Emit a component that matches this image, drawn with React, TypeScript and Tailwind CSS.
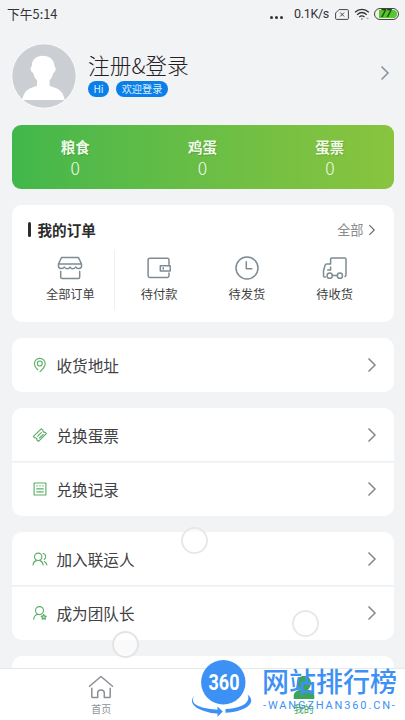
import type { ReactNode } from 'react'
import clsx from 'clsx'

const ORDER_GRAY = '#7d8b93'
const GREEN = '#5aae68'

interface IconProps { className?: string }

function Chevron({ className }: IconProps) {
  return (
    <svg viewBox="0 0 10 16" fill="none" stroke="currentColor" strokeWidth="1.5" className={clsx('shrink-0', className)}>
      <path d="M1.5 1.5 8 8l-6.5 6.5" />
    </svg>
  )
}

function OrderIcon({ children }: { children: ReactNode }) {
  return (
    <svg viewBox="0 0 26 26" className="size-[26px]" fill="none" stroke={ORDER_GRAY} strokeWidth="1.5" strokeLinecap="round" strokeLinejoin="round">
      {children}
    </svg>
  )
}

function RowIcon({ children }: { children: ReactNode }) {
  return (
    <svg viewBox="0 0 16 16" className="size-4 shrink-0" fill="none" stroke={GREEN} strokeWidth="1.15" strokeLinecap="round" strokeLinejoin="round">
      {children}
    </svg>
  )
}

const BALANCES = ['粮食', '鸡蛋', '蛋票']

const ORDERS = [
  {
    label: '全部订单',
    icon: (
      <OrderIcon>
        <path d="M4.500 2.500h17l3 6.500v2.500c0 2.200-4.500 2.900-5.800.5-1.300 2.400-4.500 2.200-5.700.2-1.200 2-4.400 2.200-5.700-.2-1.300 2.400-5.800 1.700-5.800-.5V9zM1.500 9h23" />
        <path d="M3.700 16.500V22c0 .9.600 1.500 1.500 1.500h16c.9 0 1.500-.6 1.500-1.500v-5.500" />
      </OrderIcon>
    ),
  },
  {
    label: '待付款',
    icon: (
      <OrderIcon>
        <path d="M23 9.500V5c0-1.100-.6-1.700-1.700-1.700H3.800c-1.100 0-1.700.6-1.700 1.700v15.800c0 1.100.6 1.700 1.700 1.700h17.500c1.100 0 1.700-.6 1.700-1.700V18" />
        <path d="M14.300 10.800h9.900V16h-9.900zM17.200 12.700v1.400" />
      </OrderIcon>
    ),
  },
  {
    label: '待发货',
    icon: (
      <OrderIcon>
        <circle cx="13" cy="13" r="11" />
        <path d="M12.300 6.800v7h5.500" />
      </OrderIcon>
    ),
  },
  {
    label: '待收货',
    icon: (
      <OrderIcon>
        <path d="M3.500 22h-1c-.8 0-1-.4-1-1v-5.300l1.500-5.200c.3-1 .8-1.500 1.700-1.500H8.600V4.200c0-.8.4-1.200 1.200-1.200h13c.8 0 1.200.4 1.200 1.200V20c0 .8-.2 1.200-1 1.500" />
        <path d="M8.600 12v3H5.700M10.400 20.600h4.800" />
        <circle cx="7.700" cy="20.700" r="2.600" />
        <circle cx="17.900" cy="20.700" r="2.600" />
      </OrderIcon>
    ),
  },
]

const MENU = [
  [
    {
      label: '收货地址',
      icon: (
        <RowIcon>
          <path d="M5.800 12.700C3.500 10.700 2.400 8.700 2.400 6.700a5.400 5.400 0 1 1 10.800 0c0 3-2.500 5.500-5.200 8" />
          <circle cx="7.800" cy="6.500" r="2.500" />
        </RowIcon>
      ),
    },
  ],
  [
    {
      label: '兑换蛋票',
      icon: (
        <RowIcon>
          <path d="m9.200 1.800 1.700 1.300c-.2 1.400.7 2.300 2.200 2.200l1.300 1.400-7.900 7.600-1.600-1.300c.3-1.500-.8-2.500-2.200-2.200L1.400 9.300z" />
          <path d="m5.700 9.200 3.700-3.500M7.500 11l3.700-3.500" />
        </RowIcon>
      ),
    },
    {
      label: '兑换记录',
      icon: (
        <RowIcon>
          <path d="M2.100 2h11.800v12H2.100zM4.700 7.800h6.600M4.700 10.800h6.600M5 4.600v.5M8 4.600v.5M11 4.600v.5" />
        </RowIcon>
      ),
    },
  ],
  [
    {
      label: '加入联运人',
      icon: (
        <RowIcon>
          <circle cx="6.200" cy="5.800" r="3.700" />
          <path d="M1 14c.4-2.600 1.900-4 3.700-4.600M7.800 9.400c1.900.7 2.900 2.200 3.300 4.600M11 2.500c2.800.2 3.800 4.400 1.200 6M12.300 10.500c1.500.7 2.300 1.800 2.600 3.300" />
        </RowIcon>
      ),
    },
    {
      label: '成为团队长',
      icon: (
        <RowIcon>
          <circle cx="7.500" cy="5.600" r="4" />
          <path d="M1.700 14.200c.3-2.700 1.700-4.200 4-4.900" />
          <path d="m11.700 9.400.8 1.500 1.800.3-1.200 1.300.2 1.700-1.600-.7-1.600.7.2-1.700-1.200-1.300 1.800-.3z" fill={GREEN} fillOpacity=".35" />
        </RowIcon>
      ),
    },
  ],
]

function StatusBar() {
  return (
    <div className="flex h-7 items-center justify-between pl-[7px] pr-[6px] text-[#303236]">
      <span className="text-[12.800px] leading-none">下午5:14</span>
      <div className="flex items-center">
        <div className="mr-[11px] mt-1.5 flex gap-[2px]">
          <i className="size-[3px] rounded-full bg-[#333]" />
          <i className="size-[3px] rounded-full bg-[#333]" />
          <i className="size-[3px] rounded-full bg-[#333]" />
        </div>
        <span className="mr-[6px] w-[35px] whitespace-nowrap font-[Roboto] text-[12.500px] leading-none tracking-[-0.300px]">0.1K/s</span>
        <svg viewBox="0 0 14 11" className="mr-[5px] h-[11px] w-[14px]" fill="none" stroke="#444" strokeWidth="1">
          <path d="M4 .6h8.400c.6 0 1 .4 1 1v7.800c0 .6-.4 1-1 1H1.600c-.6 0-1-.4-1-1V4zM5.200 3.500l4 4M9.200 3.500l-4 4" />
        </svg>
        <svg viewBox="0 0 16 12" className="mr-[4px] h-3 w-4" fill="none" stroke="#333" strokeWidth="1.300">
          <path d="M1 4.300c4-3.800 9.800-3.800 13.800 0M3.100 6.700c2.900-2.600 6.700-2.600 9.600 0M5.300 8.900c1.600-1.300 3.600-1.300 5.200 0" />
          <circle cx="7.900" cy="10.900" r=".7" fill="#333" stroke="none" />
          <path d="M12.500 10.400h2" stroke="#aaa" />
        </svg>
        <div className="flex h-[12px] w-[25px] items-center justify-end rounded-full border border-[#444] bg-[#e9f6e4] p-px">
          <div className="flex h-full w-[18px] items-center justify-center rounded-r-full bg-[#58c62c] pr-1 font-[Roboto] text-[10px] font-bold italic leading-none text-[#17480f]">77</div>
        </div>
      </div>
    </div>
  )
}

function Profile() {
  return (
    <div className="flex h-[97px] items-start pl-[11px] pr-[15px] pt-[15px]">
      <svg viewBox="0 0 66 66" className="size-[66px] shrink-0">
        <circle cx="33" cy="33" r="32.200" fill="#cbcfd4" stroke="#fff" strokeWidth=".8" />
        <path d="M11.200 57c1.200-6.500 4-10.200 8.800-12l6-2.200v-5.600c-2-1.800-3.200-4-3.900-7.400-2.600-.7-3.200-5.500-1.300-6.800C20.700 16 26 12.700 31.500 12.700c6.700 0 12.200 4 12 10.800 2 1 1.500 5.700-1.200 6.500-.7 3-1.800 5.500-3.700 7.200v5.600l6.100 2.200c4.900 1.800 7.800 5.600 9.100 12z" fill="#fff" />
      </svg>
      <div className="ml-[11px] flex-1 pt-2">
        <h1 className="text-[21.700px] font-light leading-[28px] text-[#1f2125]">注册&amp;登录</h1>
        <div className="mt-[2px] flex gap-[7px] text-[10.200px] leading-[16px] text-[#d9f0ff]">
          <span className="w-[21px] rounded-full bg-[#0b7ee9] text-center">Hi</span>
          <span className="w-[52px] rounded-full bg-[#0b7ee9] text-center">欢迎登录</span>
        </div>
      </div>
      <Chevron className="mt-[22px] h-4 w-[10px] text-[#84919a]" />
    </div>
  )
}

function Orders() {
  return (
    <section className="h-[117px] shrink-0 rounded-[10px] bg-white">
      <div className="flex items-center pl-[16px] pr-[18px] pt-[16px]">
        <span className="h-[15px] w-[3px] rounded-full bg-[#2c2c2c]" />
        <h2 className="ml-[7px] flex-1 text-[14.600px] font-bold leading-[17px] text-[#2b2b2b]">我的订单</h2>
        <span className="text-[13.200px] leading-[17px] text-[#8b8b8b]">全部</span>
        <Chevron className="ml-[4px] h-[12px] w-[8px] text-[#666]" />
      </div>
      <div className="mt-[12px] flex pl-[15px] pr-[15px]">
        {ORDERS.map((order, idx) => (
          <div key={order.label} className={clsx('flex h-[60px] flex-1 flex-col items-center pt-[5px]', idx === 0 && 'border-r border-[#f0f0f0]')}>
            {order.icon}
            <span className="mt-[5px] text-[12.200px] leading-[16px] text-[#404040]">{order.label}</span>
          </div>
        ))}
      </div>
    </section>
  )
}

function TabBar() {
  return (
    <nav className="grid h-[52px] shrink-0 grid-cols-2 border-t border-[#e7e8ea] bg-white text-[10px] leading-[14px]">
      <div className="flex flex-col items-center pt-[5px] text-[#8f9499]">
        <svg viewBox="0 0 26 26" className="size-[26px]" fill="none" stroke="#8a8f95" strokeWidth="1.500" strokeLinecap="round" strokeLinejoin="round">
          <path d="M1.500 12.300 13 2.500l11.500 9.800M3.800 14.200v8.500c0 .6.3.9.900.9h5v-4.400c0-4.200 6.600-4.200 6.600 0v4.400h5c.6 0 .9-.3.900-.9v-8.500" />
        </svg>
        <span className="mt-[2px]">首页</span>
      </div>
      <div className="flex flex-col items-center pt-[6px] text-[#43a557]">
        <svg viewBox="0 0 24 24" className="size-6" fill="#3da45a">
          <path d="M12 1c4.200 0 7 2.600 7 6.700 0 3-1.300 5.500-3.200 7 3.500.8 6.100 2.500 6.500 5.800V24H1.700v-3.500c.4-3.300 3-5 6.500-5.800-1.900-1.500-3.200-4-3.200-7C5 3.600 7.800 1 12 1z" />
        </svg>
        <span className="mt-[3px]">我的</span>
      </div>
    </nav>
  )
}

function Watermark() {
  return (
    <div className="absolute bottom-0 right-[5px] flex h-[62px] w-[206px] text-[#3d91f5]">
      <div className="relative w-[60px] shrink-0">
        <svg viewBox="0 0 60 62" className="h-[62px] w-[60px] overflow-visible" fill="#3d91f5">
          <circle cx="29.300" cy="24.300" r="22.200" />
          <path d="M.8 37.500C-5.500 43-1 49.500 10 53c6 2 10 2.600 13.500 2.400v3.300l5.300-5.200-5.300-5v3.200C12 51-1.500 48-1.100 42c0-2 .8-3.300 1.900-4.500z" />
          <path d="M53.500 36.500c9 6.500 2 16.700-22 18.300v-3.700c15-1.100 26-6 22-14.600z" />
        </svg>
        <div className="absolute inset-x-0 top-[13px] h-[23px] scale-x-[0.800] text-center font-[Roboto] text-[22.500px] font-bold leading-[23px] text-white">360</div>
      </div>
      <div className="pl-[8px] pt-[8px]">
        <div className="whitespace-nowrap text-[27px] font-medium leading-[30px]">网站排行榜</div>
        <div className="mt-[4px] whitespace-nowrap pl-px font-[Roboto] text-[11px] leading-[12px] tracking-[1.850px]">-WANGZHAN360.CN-</div>
      </div>
    </div>
  )
}

// soft touch rings floating over the list
function Bubbles() {
  return (
    <>
      <i className="absolute left-[181px] top-[527px] size-[27px] rounded-full border-2 border-[#e7e8ea] bg-white/60" />
      <i className="absolute left-[292px] top-[610px] size-[27px] rounded-full border-2 border-[#e7e8ea] bg-white/60" />
      <i className="absolute left-[112px] top-[631px] size-[27px] rounded-full border-2 border-[#e3e4e6] bg-white/60" />
    </>
  )
}

export default function App() {
  return (
    <div className="relative flex h-[720px] w-[405px] flex-col overflow-hidden bg-[#f2f3f5] font-['Noto_Sans_CJK_SC',sans-serif]">
      <StatusBar />
      <Profile />
      <main className="flex min-h-0 flex-1 flex-col gap-4 overflow-hidden px-[11.500px]">
        <section className="grid h-16 shrink-0 grid-cols-3 rounded-[9px] bg-linear-to-r from-[#41b74b] to-[#89c43e] pt-[13px] text-center text-[#effbe8]">
          {BALANCES.map(label => (
            <div key={label}>
              <div className="text-[14.500px] font-bold leading-[18px] [text-shadow:1px_1px_1px_rgba(0,0,0,0.150)]">{label}</div>
              <div className="text-[17.500px] font-light leading-[24px]">0</div>
            </div>
          ))}
        </section>
        <Orders />
        {MENU.map((group, idx) => (
          <section key={idx} className="shrink-0 overflow-hidden rounded-[10px] bg-white">
            {group.map((item, row) => (
              <div
                key={item.label}
                className={clsx(
                  'flex h-[54px] items-center pl-5 pr-[17px]',
                  row > 0 && 'shadow-[0_-1px_0_#eeeff1,inset_0_1px_0_#f4f5f6]',
                )}
              >
                {item.icon}
                <span className="-mt-px ml-[9px] flex-1 text-[15.600px] leading-[22px] text-[#404144]">{item.label}</span>
                <Chevron className="h-4 w-[10px] text-[#84898d]" />
              </div>
            ))}
          </section>
        ))}
        <section className="h-[54px] shrink-0 rounded-[10px] bg-white" />
      </main>
      <TabBar />
      <Bubbles />
      <Watermark />
    </div>
  )
}
